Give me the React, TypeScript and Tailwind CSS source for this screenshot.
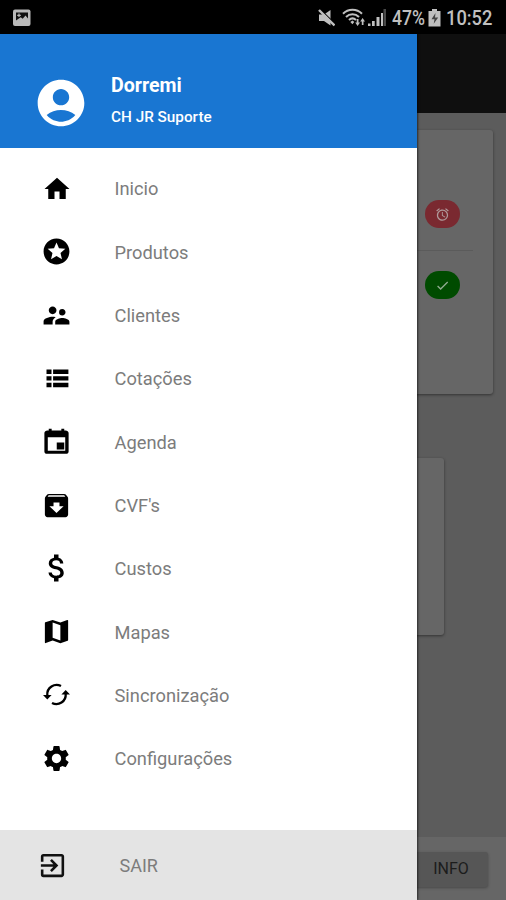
import {
  MdAccountCircle,
  MdAlarm,
  MdAttachMoney,
  MdCheck,
  MdExitToApp,
  MdHome,
  MdMap,
  MdSettings,
  MdStars,
  MdSupervisorAccount,
} from "react-icons/md";

type IconProps = { size?: number; className?: string };

function ListIcon({ size, className }: IconProps) {
  return (
    <svg width={size} height={size} viewBox="0 0 31 31" fill="currentColor" className={className}>
      <path d="M5.5 6.5h5v4.6h-5zM12.1 6.5h15.3v4.6H12.1zM5.5 13.3h5v4.2h-5zM12.1 13.3h15.3v4.2H12.1zM5.5 19.8h5v4.500h-5zM12.1 19.8h15.3v4.500H12.1z" />
    </svg>
  );
}

function CalendarIcon({ size, className }: IconProps) {
  return (
    <svg width={size} height={size} viewBox="0 0 512 512" fill="currentColor" className={className}>
      <path d="M384 272H260v116h124zM336 44v32H176V44h-48v32h-24c-22 0-48 18-48 40v304c0 22 18 40 40 40h320c22 0 40-18 40-40V116c0-22-26-40-48-40h-24V44zm64 366H112V186h288z" />
    </svg>
  );
}

function ArchiveIcon({ size, className }: IconProps) {
  return (
    <svg width={size} height={size} viewBox="0 0 24 24" fill="currentColor" className={className}>
      <path d="M20.54 5.23l-1.39-1.68C18.88 3.21 18.47 3 18 3H6c-.47 0-.88.21-1.16.55L3.46 5.23C3.17 5.57 3 6.02 3 6.5V19c0 1.1.9 2 2 2h14c1.1 0 2-.9 2-2V6.5c0-.48-.17-.93-.46-1.27zM12 17.8L6.5 12.5H9.7V9.7h4.6v2.8h3.2L12 17.8zM5.12 5.3l.81-1.2h12l.94 1.2H5.12z" />
    </svg>
  );
}

function SyncIcon({ size, className }: IconProps) {
  return (
    <svg width={size} height={size} viewBox="0 0 31 31" className={className}>
      <g fill="none" stroke="currentColor" strokeWidth="2.3">
        <path d="M20 6.1A9.3 9.3 0 0 0 6.3 15" />
        <path d="M11 22.9A9.3 9.3 0 0 0 24.7 14" />
      </g>
      <path d="M2 15h8.6l-4.3 4.6zM20.4 14.5H29l-4.3-4.6z" fill="currentColor" />
    </svg>
  );
}

const items = [
  { label: "Inicio", Icon: MdHome, size: 30 },
  { label: "Produtos", Icon: MdStars, size: 31 },
  { label: "Clientes", Icon: MdSupervisorAccount, size: 31 },
  { label: "Cotações", Icon: ListIcon, size: 31 },
  { label: "Agenda", Icon: CalendarIcon, size: 31 },
  { label: "CVF's", Icon: ArchiveIcon, size: 31 },
  { label: "Custos", Icon: MdAttachMoney, size: 36 },
  { label: "Mapas", Icon: MdMap, size: 31 },
  { label: "Sincronização", Icon: SyncIcon, size: 31 },
  { label: "Configurações", Icon: MdSettings, size: 31 },
];

function StatusBar() {
  return (
    <div className="flex h-[34px] items-center bg-black pt-px pl-[13px] text-[#c0c0c0]">
      <svg width="18" height="18" viewBox="0 0 18 18" className="shrink-0">
        <rect x="0" y="0.5" width="17.5" height="16.5" rx="2" fill="#b9b9b9" />
        <path d="M3 3.5h12v6l-2.5-3-2.8 3.3-2-1.6L3 11.5z" fill="#111" />
        <path d="M4.2 6.3h3.6M6 4.6v3.5" stroke="#b9b9b9" strokeWidth="1.2" />
      </svg>

      <svg width="17" height="18" viewBox="0 0 17 18" className="ml-[287px] shrink-0">
        <path d="M1 5.5h5L12.5 1v15.5L6 12H1z" fill="currentColor" />
        <path d="M3 .8l14 14" stroke="#000" strokeWidth="1.2" />
        <path d="M1 1l15.5 15.5" stroke="currentColor" strokeWidth="2.4" />
      </svg>

      <svg width="45" height="19" viewBox="0 0 45 19" className="ml-[7px] shrink-0">
        <g fill="none" stroke="currentColor" strokeWidth="2">
          <path d="M1 5.8c5.2-5.3 13.8-5.3 19 0" />
          <path d="M4 9c3.7-3.7 9.3-3.7 13 0" />
          <path d="M7 12c2.2-2.1 4.8-2.1 7 0" />
        </g>
        <path d="M8.3 14l2.2-1.5 1.8 1.5-1.9 2.3z" fill="currentColor" />
        <path d="M13.2 14.5h1.5V11h1.8v3.5H18L15.6 18z" fill="currentColor" />
        <path d="M18.2 13.5h1.6V17h1.7v-3.5H23L20.6 10z" fill="currentColor" />
        <path d="M26 15.5h2.5V18H26zM30 13h2.7v5H30zM34.5 9h3v9h-3zM39 5h2v13h-2z" fill="currentColor" />
        <path d="M41.5 1H44v17h-2.5z" fill="#484848" />
      </svg>

      <span className="ml-[5px] w-[35px] shrink-0 origin-left scale-x-[0.84] text-[21px] leading-[34px] font-medium whitespace-nowrap">
        47%
      </span>

      <svg width="13" height="18" viewBox="0 0 13 18" className="ml-px shrink-0">
        <path d="M4 0h5v2h3.5v15.5H.5V2H4z" fill="currentColor" />
        <path d="M7.5 4L3.5 10.2h3l-.8 4.5 4.5-6.200H7z" fill="#444" />
      </svg>

      <span className="ml-[5px] w-[50px] shrink-0 origin-left scale-x-[0.87] text-[21px] leading-[34px] font-medium whitespace-nowrap">
        10:52
      </span>
    </div>
  );
}

function Dashboard() {
  return (
    <div className="flex flex-1 flex-col bg-[#5c5c5c]">
      <div className="h-[79px] bg-[#0f0f0f]" />

      {/* Indicators */}
      <div className="mx-[13px] mt-[17px] h-[264px] rounded-[3px] bg-[#666] px-5 pt-[53px] shadow-[0_1px_3px_rgba(0,0,0,0.45)]">
        <div className="flex h-[68px] justify-end border-b border-[#5b5b5b] pt-[17px] pr-[13px]">
          <span className="flex h-7 w-[35px] items-center justify-center rounded-[14px] bg-[#7a2930] text-[#b09a9b]">
            <MdAlarm size={15} />
          </span>
        </div>
        <div className="flex justify-end pt-[20px] pr-[13px]">
          <span className="flex h-7 w-[35px] items-center justify-center rounded-[14px] bg-[#004b00] text-[#8faa8f]">
            <MdCheck size={15} />
          </span>
        </div>
      </div>

      <div className="mt-16 mr-[62px] ml-[62px] h-[177px] rounded-[3px] bg-[#666] shadow-[0_1px_3px_rgba(0,0,0,0.45)]" />

      <div className="mt-auto flex h-[63px] justify-end bg-[#666] pt-[15px] pr-[18px]">
        <div className="flex h-[35px] w-[74px] items-center justify-center rounded-[3px] bg-[#565656] pb-[2px] text-[16px] text-[#1c1c1c] shadow-[0_1px_3px_rgba(0,0,0,0.3)]">
          INFO
        </div>
      </div>
    </div>
  );
}

function Drawer() {
  return (
    <div className="absolute top-[34px] bottom-0 left-0 flex w-[417px] flex-col bg-white shadow-[1px_0_2px_rgba(0,0,0,0.6)]">
      <div className="flex h-[114px] bg-[#1976d2] pl-[33px] text-white">
        <MdAccountCircle size={56} className="mt-[41px] shrink-0" />
        <div className="ml-[22px] pt-[40px]">
          <div className="text-[19.6px] leading-6 font-bold">Dorremi</div>
          <div className="mt-[9px] text-[15.3px] leading-5 font-medium">CH JR Suporte</div>
        </div>
      </div>

      <nav className="flex flex-col pt-[9px]">
        {items.map(({ label, Icon, size }) => (
          <div key={label} className="flex h-[63.3px] items-center pl-[41px]">
            <div className="flex w-[31px] shrink-0 justify-center">
              <Icon size={size} className="shrink-0 text-black" />
            </div>
            <span className="ml-[42.5px] pt-px text-[18.3px] text-[#7c7c7c]">{label}</span>
          </div>
        ))}
      </nav>

      <div className="mt-auto flex h-[70px] items-center bg-[#e4e4e4] pl-[37px]">
        <MdExitToApp size={31} className="shrink-0 text-[#111]" />
        <span className="ml-[51.5px] pt-px text-[18px] text-[#7c7c7c]">SAIR</span>
      </div>
    </div>
  );
}

export default function App() {
  return (
    <div className="relative flex h-[900px] w-[506px] flex-col overflow-hidden font-['Roboto',sans-serif]">
      <StatusBar />
      <Dashboard />
      <Drawer />
    </div>
  );
}
